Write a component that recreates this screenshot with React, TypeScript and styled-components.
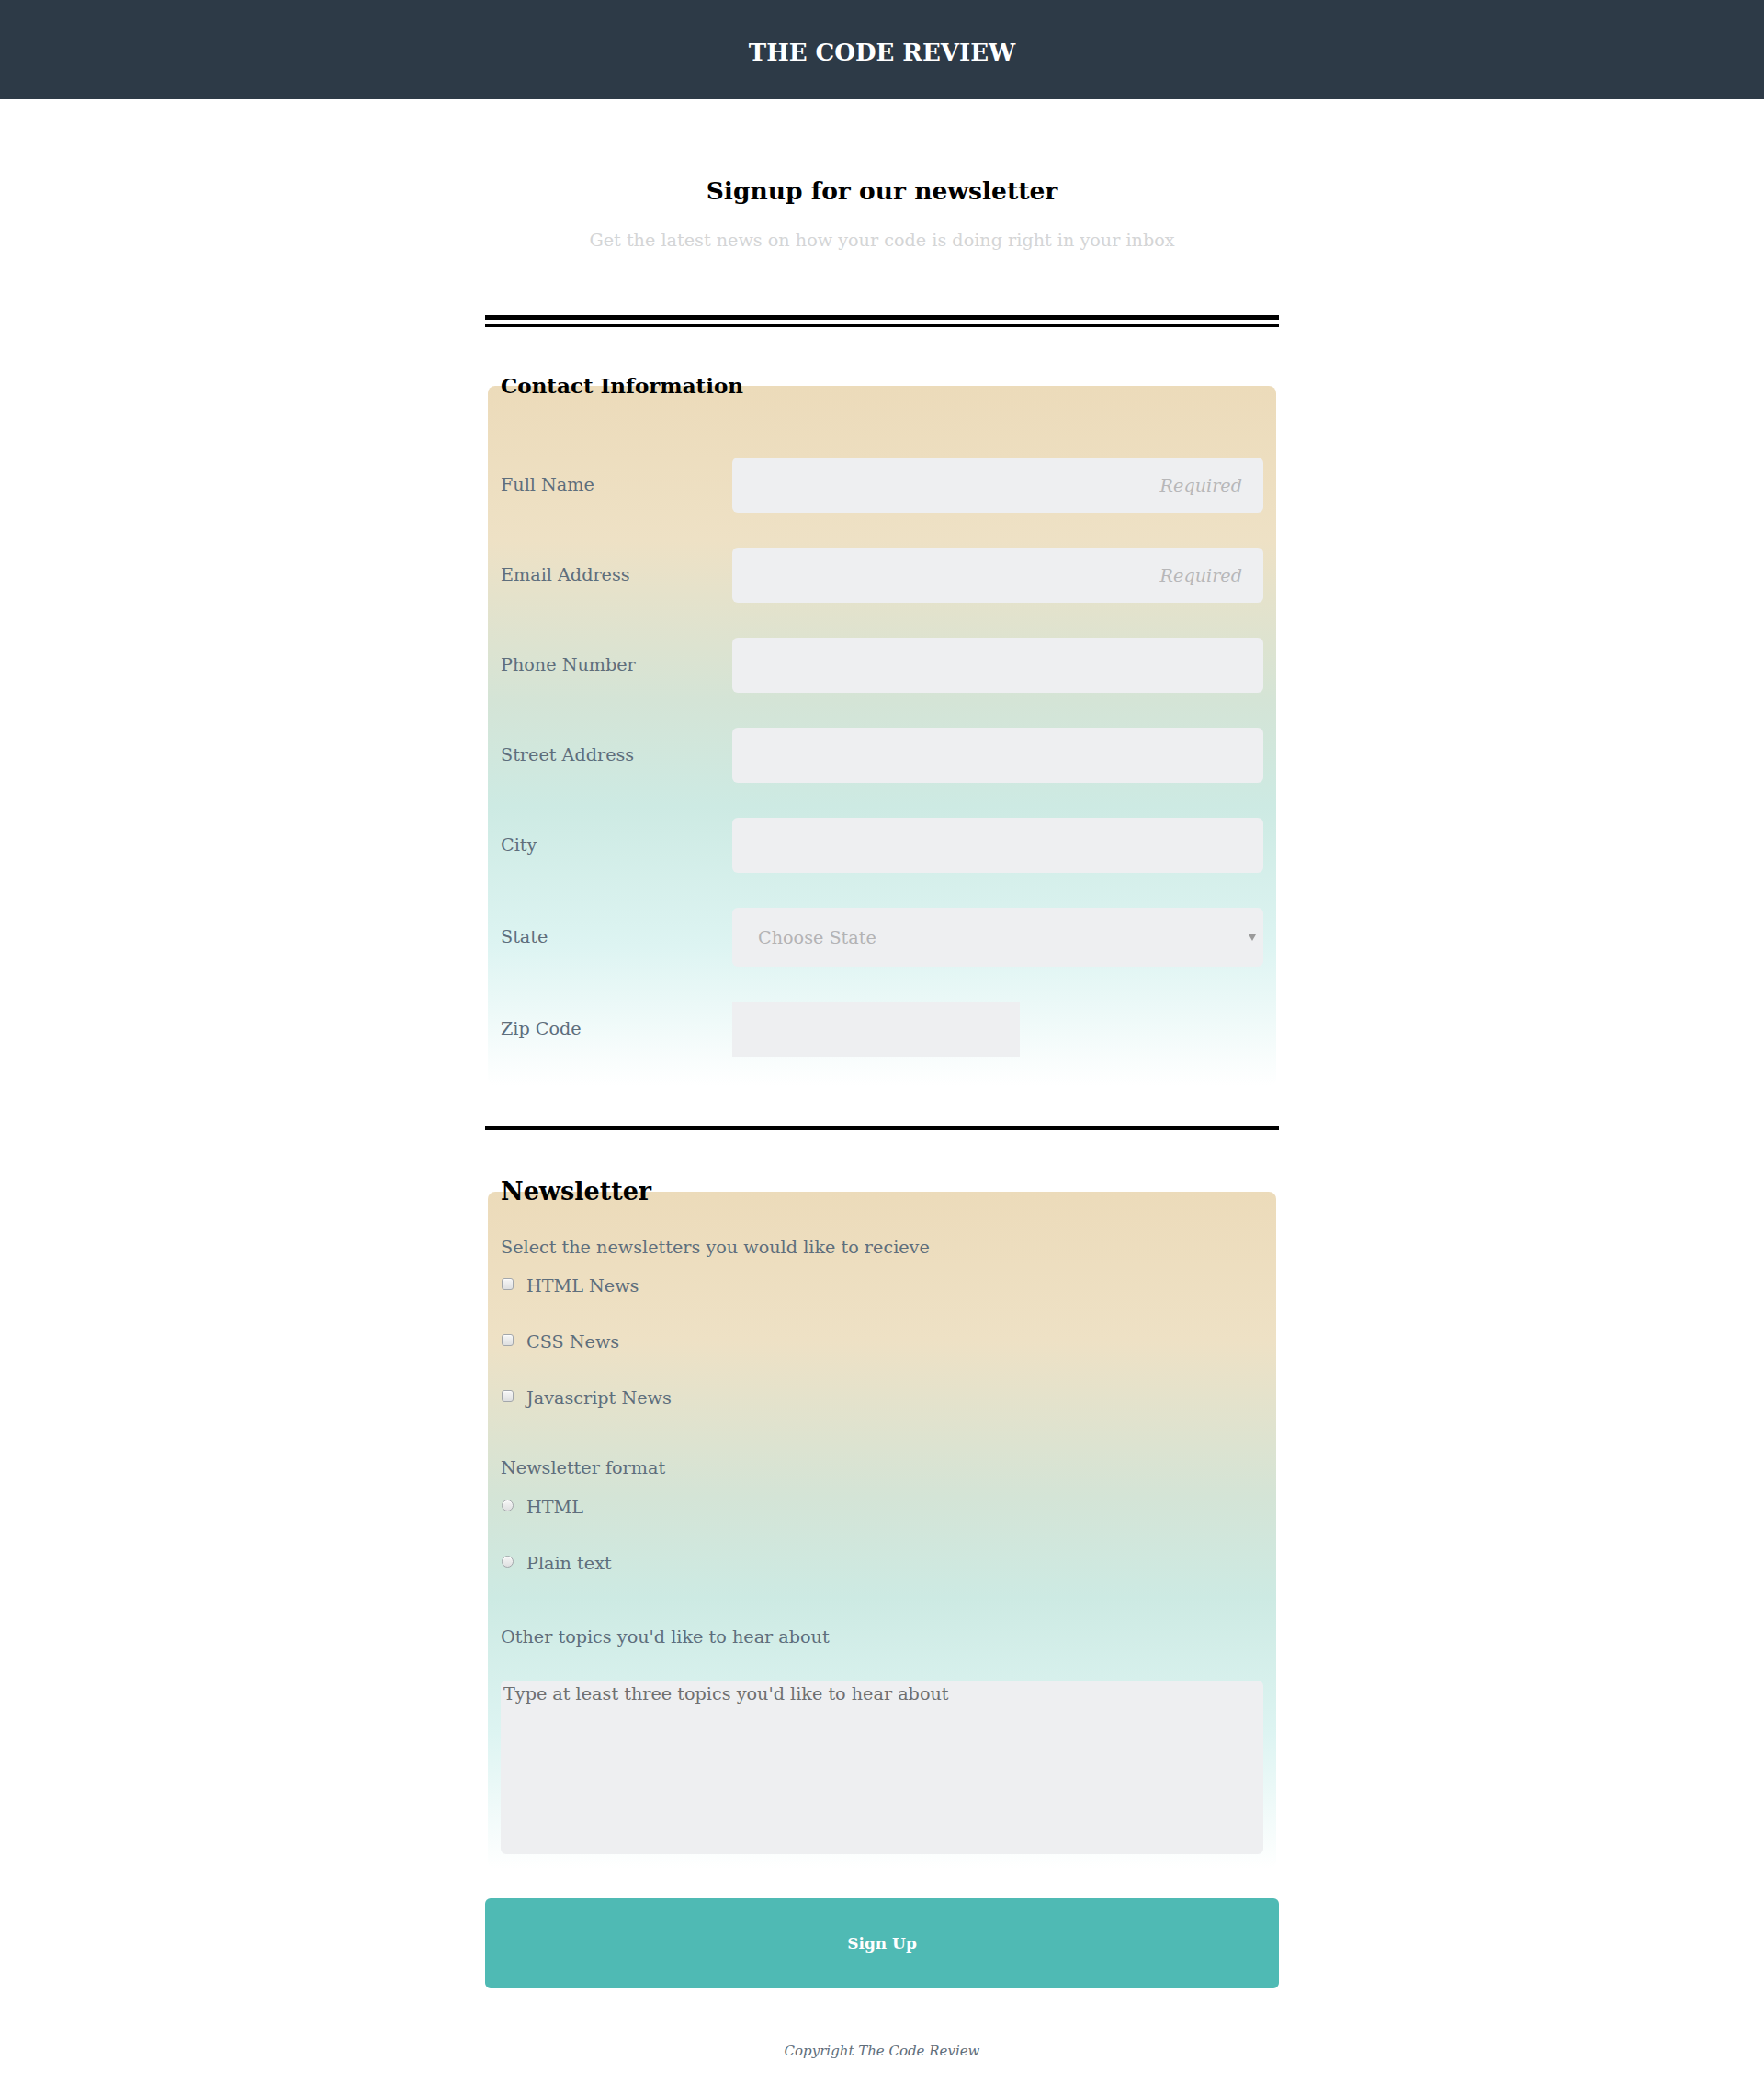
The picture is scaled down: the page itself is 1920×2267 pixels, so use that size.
import React from "react";
import styled, { createGlobalStyle } from "styled-components";

const GlobalStyle = createGlobalStyle`
  html, body { margin: 0; padding: 0; background: #ffffff; }
  body { font-family: "DejaVu Serif", "Liberation Serif", serif; color: #000; }
  * { box-sizing: border-box; }
`;

const Header = styled.header`
  height: 108px;
  padding-top: 6px;
  background: #2d3a47;
  display: flex;
  align-items: center;
  justify-content: center;
`;

const Brand = styled.h1`
  margin: 0;
  color: #ffffff;
  font-size: 26px;
  line-height: 30px;
  font-weight: 700;
`;

const Main = styled.main`
  width: 864px;
  margin: 0 auto;
  display: flex;
  flex-direction: column;
`;

const Intro = styled.div`
  padding-top: 82px;
  text-align: center;
`;

const Title = styled.h2`
  margin: 0;
  font-size: 26.5px;
  line-height: 36px;
  font-weight: 700;
`;

const Subtitle = styled.p`
  margin: 24px 0 0;
  font-size: 19.2px;
  line-height: 24px;
  color: #d4d5d6;
`;

const DoubleRule = styled.div`
  margin-top: 69px;
  height: 13px;
  border-top: 5px solid #000;
  border-bottom: 3px solid #000;
`;

const Rule = styled.hr`
  margin: 44px 0 0;
  border: 0;
  border-top: 4px solid #000;
  height: 0;
`;

const Fieldset = styled.fieldset<{ $top: number; $pad: string }>`
  margin: ${(p) => p.$top}px 3px 0;
  padding: ${(p) => p.$pad};
  border: 0;
  border-radius: 8px;
  min-width: 0;
  background: linear-gradient(
    180deg,
    #ecdbba 0%,
    #eee1c5 22%,
    #d4e4d6 45%,
    #cdeae3 60%,
    #ddf4f2 80%,
    #ffffff 100%
  );
`;

const Legend = styled.legend<{ $size: number; $lh: number }>`
  padding: 0;
  margin-left: 0;
  font-size: ${(p) => p.$size}px;
  line-height: ${(p) => p.$lh}px;
  font-weight: 700;
  color: #000;
`;

const Rows = styled.div`
  display: flex;
  flex-direction: column;
  gap: 38px;
`;

const Row = styled.div`
  display: grid;
  grid-template-columns: 252px 578px;
  align-items: center;
`;

const Label = styled.label`
  font-size: 19.2px;
  line-height: 24px;
  color: #5e6e7c;
`;

const TextInput = styled.input<{ $narrow?: boolean }>`
  height: 60px;
  width: ${(p) => (p.$narrow ? "313px" : "100%")};
  border: 0;
  border-radius: ${(p) => (p.$narrow ? "0" : "6px")};
  background: #eeeff1;
  padding: 0 23px 0 20px;
  font-family: inherit;
  font-size: 19.2px;
  text-align: right;
  color: #333;
  outline: none;
  &::placeholder {
    color: #b7b7b9;
    font-style: italic;
  }
`;

const SelectWrap = styled.div`
  position: relative;
  &::after {
    content: "";
    position: absolute;
    right: 8px;
    top: 29px;
    border-left: 4px solid transparent;
    border-right: 4px solid transparent;
    border-top: 7px solid #9a9a9a;
    pointer-events: none;
  }
`;

const Select = styled.select`
  appearance: none;
  -webkit-appearance: none;
  width: 100%;
  height: 64px;
  border: 0;
  border-radius: 6px;
  background: #eeeff1;
  padding: 0 28px;
  font-family: inherit;
  font-size: 19.2px;
  color: #b3b3b5;
  outline: none;
`;

const Prompt = styled.p<{ $top: number }>`
  margin: ${(p) => p.$top}px 0 0;
  font-size: 19.2px;
  line-height: 24px;
  color: #5e6e7c;
`;

const Options = styled.div<{ $top: number }>`
  margin-top: ${(p) => p.$top}px;
  display: flex;
  flex-direction: column;
  gap: 37px;
`;

const Option = styled.label`
  display: flex;
  align-items: center;
  height: 24px;
  font-size: 19.2px;
  line-height: 24px;
  color: #5e6e7c;
`;

const Check = styled.input<{ $round?: boolean }>`
  appearance: none;
  -webkit-appearance: none;
  flex: none;
  margin: 0 14px 0 1px;
  width: 13px;
  height: 13px;
  position: relative;
  top: -3px;
  border: 1px solid #a3a7ab;
  border-radius: ${(p) => (p.$round ? "50%" : "3px")};
  background: linear-gradient(180deg, #f6f6f6 0%, #dedfe0 100%);
  box-shadow: inset 0 1px 1px rgba(255, 255, 255, 0.8);
`;

const TextArea = styled.textarea`
  display: block;
  margin-top: 35px;
  width: 100%;
  height: 189px;
  border: 0;
  border-radius: 6px;
  background: #eeeff1;
  padding: 3px 3px;
  font-family: inherit;
  font-size: 19.2px;
  line-height: 24px;
  resize: none;
  outline: none;
  &::placeholder {
    color: #6f6f70;
  }
`;

const SubmitButton = styled.button`
  margin-top: 32px;
  height: 98px;
  width: 100%;
  border: 0;
  border-radius: 6px;
  background: #4fbab4;
  color: #ffffff;
  font-family: inherit;
  font-size: 17px;
  font-weight: 700;
  cursor: pointer;
`;

const Footer = styled.footer`
  margin-top: 58px;
  padding-bottom: 26px;
  text-align: center;
  font-size: 15px;
  line-height: 20px;
  font-style: italic;
  color: #5e6e7c;
`;

const contactFields = [
  { id: "name", label: "Full Name", required: true },
  { id: "email", label: "Email Address", required: true },
  { id: "phone", label: "Phone Number" },
  { id: "street", label: "Street Address" },
  { id: "city", label: "City" },
];

export default function App() {
  return (
    <>
      <GlobalStyle />
      <Header>
        <Brand>THE CODE REVIEW</Brand>
      </Header>
      <Main>
        <Intro>
          <Title>Signup for our newsletter</Title>
          <Subtitle>Get the latest news on how your code is doing right in your inbox</Subtitle>
        </Intro>
        <DoubleRule />
        <Fieldset $top={49} $pad="63px 14px 32px">
          <Legend $size={23} $lh={30}>Contact Information</Legend>
          <Rows>
            {contactFields.map((f) => (
              <Row key={f.id}>
                <Label htmlFor={f.id}>{f.label}</Label>
                <TextInput id={f.id} placeholder={f.required ? "Required" : ""} />
              </Row>
            ))}
            <Row>
              <Label htmlFor="state">State</Label>
              <SelectWrap>
                <Select id="state" defaultValue="">
                  <option value="" disabled>
                    Choose State
                  </option>
                  <option value="AL">Alabama</option>
                  <option value="CA">California</option>
                  <option value="NY">New York</option>
                </Select>
              </SelectWrap>
            </Row>
            <Row>
              <Label htmlFor="zip">Zip Code</Label>
              <TextInput id="zip" $narrow />
            </Row>
          </Rows>
        </Fieldset>
        <Rule />
        <Fieldset $top={49} $pad="31px 14px 16px">
          <Legend $size={27} $lh={36}>Newsletter</Legend>
          <Prompt $top={0}>Select the newsletters you would like to recieve</Prompt>
          <Options $top={18}>
            <Option>
              <Check type="checkbox" />
              HTML News
            </Option>
            <Option>
              <Check type="checkbox" />
              CSS News
            </Option>
            <Option>
              <Check type="checkbox" />
              Javascript News
            </Option>
          </Options>
          <Prompt $top={52}>Newsletter format</Prompt>
          <Options $top={19}>
            <Option>
              <Check type="radio" name="format" $round />
              HTML
            </Option>
            <Option>
              <Check type="radio" name="format" $round />
              Plain text
            </Option>
          </Options>
          <Prompt $top={56}>Other topics you'd like to hear about</Prompt>
          <TextArea placeholder="Type at least three topics you'd like to hear about" />
        </Fieldset>
        <SubmitButton type="submit">Sign Up</SubmitButton>
        <Footer>Copyright The Code Review</Footer>
      </Main>
    </>
  );
}
